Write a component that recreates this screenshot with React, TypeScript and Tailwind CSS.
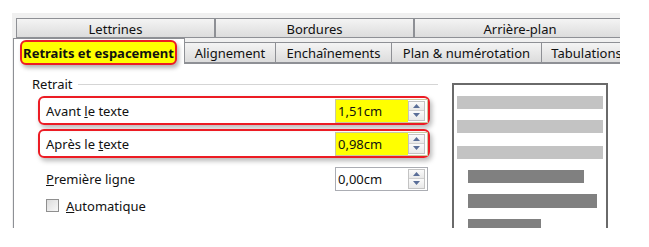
import React from "react";

const font = { fontFamily: '"Noto Sans", "Open Sans", sans-serif' };

function Spin() {
  return (
    <div className="w-[17px] h-[20px] mr-[2px] flex flex-col border border-[#c3c3c3] bg-[#f4f4f4] shrink-0">
      <div className="flex-1 flex items-center justify-center border-b border-[#d0d0d0] bg-gradient-to-b from-[#fbfbfb] to-[#e9e9e9]">
        <svg width="7" height="4" viewBox="0 0 7 4">
          <path d="M0 4 L3.5 0 L7 4 Z" fill="#5a6e98" />
        </svg>
      </div>
      <div className="flex-1 flex items-center justify-center bg-gradient-to-b from-[#fbfbfb] to-[#e9e9e9]">
        <svg width="7" height="4" viewBox="0 0 7 4">
          <path d="M0 0 L3.5 4 L7 0 Z" fill="#5a6e98" />
        </svg>
      </div>
    </div>
  );
}

function Field({ value, highlight }: { value: string; highlight?: boolean }) {
  return (
    <div
      className={
        "ml-auto w-[93px] h-[24px] border flex items-center " +
        (highlight ? "border-[#c9c9a0] bg-white" : "border-[#abadb3] bg-white")
      }
    >
      <div
        className={
          "flex-1 h-full flex items-center pl-[2px] pt-[1px] text-[13px] leading-none text-[#111] " +
          (highlight ? "bg-[#ffff00]" : "")
        }
      >
        {value}
      </div>
      <Spin />
    </div>
  );
}

export default function App() {
  return (
    <div className="w-[649px] h-[247px] bg-white pt-[13px] pl-[12px] text-[#111]" style={font}>
      <div className="w-[608px] h-[215px] bg-[#f0f0f0] flex flex-col overflow-hidden">
        {/* top tab row */}
        <div className="mt-[5px] ml-[4px] flex h-[20px] shrink-0">
          {[
            { t: "Lettrines", w: "w-[199px]" },
            { t: "Bordures", w: "w-[199px]" },
            { t: "Arrière-plan", w: "w-[212px]" },
          ].map((x) => (
            <div
              key={x.t}
              className={
                x.w +
                " shrink-0 h-full border border-[#8e9095] bg-gradient-to-b from-[#f4f4f4] to-[#dcdcdc] flex items-center justify-center pt-[2px] text-[13px] leading-none"
              }
            >
              {x.t}
            </div>
          ))}
        </div>
        {/* second tab row */}
        <div className="flex items-end h-[25px] shrink-0 ml-[1px]">
          <div className="relative z-10 w-[172px] h-[26px] -mb-[1px] bg-white border border-b-0 border-[#8e9095] shrink-0">
            <div className="absolute left-[6px] top-[1px] w-[157px] h-[25px] rounded-[6px] border-2 border-[#ec1c24] bg-[#ffff00] shadow-[2px_3px_4px_rgba(0,0,0,0.3)] flex items-center justify-center pt-[1px] text-[13px] font-bold leading-none">
              Retraits et espacement
            </div>
          </div>
          {[
            { t: "Alignement", w: "w-[91px]" },
            { t: "Enchaînements", w: "w-[116px]" },
            { t: "Plan & numérotation", w: "w-[150px]" },
            { t: "Tabulations", w: "w-[90px]" },
          ].map((x) => (
            <div
              key={x.t}
              className={
                x.w +
                " shrink-0 h-[21px] border border-l-0 border-[#8e9095] bg-gradient-to-b from-[#f4f4f4] to-[#dcdcdc] flex items-center justify-center pt-[1px] text-[13px] leading-none whitespace-nowrap"
              }
            >
              {x.t}
            </div>
          ))}
        </div>
        {/* body */}
        <div className="flex-1 ml-[1px] bg-white border-l border-t border-[#8e9095] flex">
          <div className="w-[424px] shrink-0 flex flex-col">
            <div className="mt-[12px] pl-[18px] h-[16px] flex items-center text-[13px] leading-none">
              <span>Retrait</span>
              <div className="ml-[5px] flex-1 h-[1px] bg-[#d5d5d5]" />
            </div>
            <div className="mt-[4px] ml-[24px] w-[392px] h-[29px] rounded-[6px] border-2 border-[#ec1c24] shadow-[2px_3px_5px_rgba(0,0,0,0.28)] flex items-center pl-[6px] text-[13px] leading-none">
              <span className="pt-[2px]">
                Avant <span className="underline">l</span>e texte
              </span>
              <Field value="1,51cm" highlight />
            </div>
            <div className="mt-[4px] ml-[24px] w-[392px] h-[29px] rounded-[6px] border-2 border-[#ec1c24] shadow-[2px_3px_5px_rgba(0,0,0,0.28)] flex items-center pl-[6px] text-[13px] leading-none">
              <span className="pt-[2px]">
                Après le <span className="underline">t</span>exte
              </span>
              <Field value="0,98cm" highlight />
            </div>
            <div className="mt-[8px] ml-[32px] w-[382px] h-[25px] flex items-center text-[13px] leading-none">
              <span className="pt-[2px]">
                <span className="underline">P</span>remière ligne
              </span>
              <Field value="0,00cm" />
            </div>
            <div className="mt-[7px] ml-[32px] flex items-center text-[13px] leading-none">
              <div className="w-[13px] h-[13px] border border-[#8f8f8f] bg-gradient-to-br from-[#dcdcdc] to-[#f8f8f8]" />
              <span className="ml-[7px] pt-[2px]">
                <span className="underline">A</span>utomatique
              </span>
            </div>
          </div>
          <div className="ml-[14px] mt-[19px] w-[156px] h-[170px] shrink-0 border-2 border-[#6a6a6a] flex flex-col">
            <div className="mt-[11px] ml-[3px] w-[146px] h-[13px] bg-[#c3c3c3]" />
            <div className="mt-[11px] ml-[3px] w-[146px] h-[13px] bg-[#c3c3c3]" />
            <div className="mt-[13px] ml-[3px] w-[146px] h-[13px] bg-[#c3c3c3]" />
            <div className="mt-[11px] ml-[14px] w-[116px] h-[13px] bg-[#808080]" />
            <div className="mt-[11px] ml-[14px] w-[129px] h-[14px] bg-[#808080]" />
            <div className="mt-[11px] ml-[14px] w-[73px] h-[13px] bg-[#808080]" />
          </div>
        </div>
      </div>
    </div>
  );
}
